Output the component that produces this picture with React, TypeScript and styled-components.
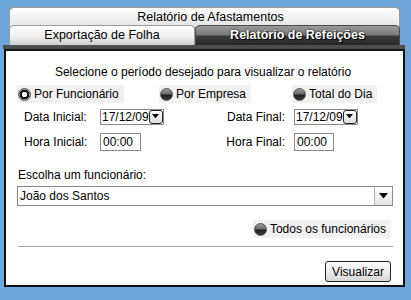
import styled, { createGlobalStyle } from "styled-components";

// -----------------GLOBAL-----------------//
const GlobalStyle = createGlobalStyle`
  body {
    margin: 0;
    background: #6fa6db;
    font-family: "Liberation Sans", Arial, sans-serif;
  }
`;

// -----------------STYLES-----------------//
const Page = styled.div`
  width: 411px;
  height: 300px;
  box-sizing: border-box;
  padding-top: 7px;
  background: #6fa6db;
  font-size: 12px;
  color: #000;
`;

const Tabs = styled.div`
  margin: 0 11px 0 9px;
`;

const BackTab = styled.div`
  height: 20px;
  box-sizing: border-box;
  border: 1px solid #9a9a9a;
  border-bottom: none;
  border-radius: 5px 5px 0 0;
  background: linear-gradient(#ffffff, #e4e4e4);
  text-align: center;
  font-size: 12.5px;
  line-height: 19px;
  padding-left: 12px;
`;

const TabRow = styled.div`
  display: flex;
  margin-top: -2px;
`;

const Tab = styled.div<{ $active?: boolean; $width: number }>`
  width: ${(p) => p.$width}px;
  height: 20px;
  box-sizing: border-box;
  border: 1px solid ${(p) => (p.$active ? "#4a4a4a" : "#9a9a9a")};
  border-bottom: none;
  border-radius: 5px 5px 0 0;
  text-align: center;
  font-size: 12.5px;
  line-height: 19px;
  background: ${(p) =>
    p.$active
      ? "linear-gradient(#9a9a9a 0%, #7a7a7a 45%, #3c3c3c 55%, #262626 100%)"
      : "linear-gradient(#ffffff 0%, #f0f0f0 55%, #cfcfcf 100%)"};
  color: ${(p) => (p.$active ? "#fff" : "#000")};
  font-weight: ${(p) => (p.$active ? "bold" : "normal")};
  text-shadow: ${(p) =>
    p.$active ? "0 0 2px #000, 1px 1px 1px #000" : "none"};
`;

const Strip = styled.div`
  height: 4px;
  margin: 0 6px 0 3px;
  background: #4e4e4e;
`;

const Panel = styled.div`
  height: 238px;
  margin: 0 6px 0 4px;
  box-sizing: border-box;
  border: 2px solid #111;
  background: #fff;
  padding: 14px 10px 0 11px;
`;

const Title = styled.div`
  text-align: center;
  line-height: 14px;
  margin-left: -4px;
`;

const RadioRow = styled.div`
  display: grid;
  grid-template-columns: 142px 133px auto;
  margin-top: 6px;
`;

const Option = styled.div`
  display: inline-flex;
  align-items: center;
  gap: 3px;
  height: 18px;
  padding: 0 5px 0 1px;
  background: #f1f1f1;
  justify-self: start;
`;

const Radio = styled.span<{ $checked?: boolean }>`
  width: 13px;
  height: 13px;
  box-sizing: border-box;
  border-radius: 50%;
  border: 1px solid #555;
  background: ${(p) =>
    p.$checked
      ? "radial-gradient(circle, #fff 0 2.5px, #111 3px 4.5px, #9a9a9a 5px)"
      : "linear-gradient(#9c9c9c 0%, #6a6a6a 45%, #1e1e1e 55%, #3a3a3a 100%)"};
`;

const FieldGrid = styled.div`
  display: grid;
  grid-template-columns: 76px 117px 77px auto;
  grid-auto-rows: 25px;
  align-items: center;
  margin: 1px 0 0 7px;
`;

const Label = styled.span<{ $right?: boolean }>`
  text-align: ${(p) => (p.$right ? "right" : "left")};
  padding-right: ${(p) => (p.$right ? "9px" : "0")};
  font-size: 12px;
`;

const DateBox = styled.div`
  width: 64px;
  height: 16px;
  box-sizing: border-box;
  border: 1px solid #8a8a8a;
  display: flex;
  align-items: center;
  justify-content: space-between;
  padding-left: 1px;
  font-size: 12px;
`;

const DateButton = styled.span`
  width: 15px;
  height: 14px;
  box-sizing: border-box;
  border: 1px solid #222;
  border-radius: 3px;
  background: linear-gradient(#fff, #dcdcdc);
  display: flex;
  align-items: center;
  justify-content: center;
`;

const TimeBox = styled.div<{ $width: number }>`
  width: ${(p) => p.$width}px;
  height: 18px;
  box-sizing: border-box;
  border: 1px solid #8a8a8a;
  padding-left: 2px;
  line-height: 16px;
  font-size: 12px;
`;

const SectionLabel = styled.div`
  margin-top: 14px;
  line-height: 14px;
  padding-left: 1px;
`;

const Select = styled.div`
  margin-top: 4px;
  width: 376px;
  height: 20px;
  box-sizing: border-box;
  border: 1px solid #8a8a8a;
  display: flex;
  align-items: stretch;
  font-size: 12px;
`;

const SelectText = styled.span`
  flex: 1;
  padding-left: 2px;
  line-height: 18px;
`;

const SelectButton = styled.span`
  width: 17px;
  border-left: 1px solid #b0b0b0;
  background: linear-gradient(#ffffff, #e2e2e2);
  display: flex;
  align-items: center;
  justify-content: center;
`;

const AllRow = styled.div`
  display: flex;
  justify-content: flex-end;
  margin-top: 14px;
  padding-right: 2px;
`;

const Divider = styled.hr`
  margin: 8px 0 0 1px;
  width: 375px;
  border: none;
  border-top: 1px solid #a8a8a8;
  height: 0;
`;

const Footer = styled.div`
  display: flex;
  justify-content: flex-end;
  margin-top: 14px;
  padding-right: 2px;
`;

const Button = styled.button`
  height: 21px;
  width: 66px;
  padding: 0;
  border: 1px solid #222;
  border-radius: 3px;
  background: linear-gradient(#ffffff, #d8d8d8);
  font-family: "Liberation Sans", Arial, sans-serif;
  font-size: 12px;
  color: #000;
`;

// -----------------ICONS-----------------//
function Caret({ size = 7 }: { size?: number }) {
  return (
    <svg width={size} height={size * 0.6} viewBox="0 0 10 6">
      <path d="M0 0 L10 0 L5 6 Z" fill="#000" />
    </svg>
  );
}

// -----------------COMPONENT-----------------//
function App() {
  return (
    <>
      <GlobalStyle />
      <Page>
        <Tabs>
          <BackTab>Relatório de Afastamentos</BackTab>
          <TabRow>
            <Tab $width={186}>Exportação de Folha</Tab>
            <Tab $width={205} $active>
              Relatório de Refeições
            </Tab>
          </TabRow>
        </Tabs>
        <Strip />
        <Panel>
          <Title>Selecione o período desejado para visualizar o relatório</Title>
          <RadioRow>
            <Option>
              <Radio $checked />
              Por Funcionário
            </Option>
            <Option>
              <Radio />
              Por Empresa
            </Option>
            <Option>
              <Radio />
              Total do Dia
            </Option>
          </RadioRow>
          <FieldGrid>
            <Label>Data Inicial:</Label>
            <DateBox>
              17/12/09
              <DateButton>
                <Caret />
              </DateButton>
            </DateBox>
            <Label $right>Data Final:</Label>
            <DateBox>
              17/12/09
              <DateButton>
                <Caret />
              </DateButton>
            </DateBox>
            <Label>Hora Inicial:</Label>
            <TimeBox $width={41}>00:00</TimeBox>
            <Label $right>Hora Final:</Label>
            <TimeBox $width={40}>00:00</TimeBox>
          </FieldGrid>
          <SectionLabel>Escolha um funcionário:</SectionLabel>
          <Select>
            <SelectText>João dos Santos</SelectText>
            <SelectButton>
              <Caret size={9} />
            </SelectButton>
          </Select>
          <AllRow>
            <Option>
              <Radio />
              Todos os funcionários
            </Option>
          </AllRow>
          <Divider />
          <Footer>
            <Button>Visualizar</Button>
          </Footer>
        </Panel>
      </Page>
    </>
  );
}

export default App;
